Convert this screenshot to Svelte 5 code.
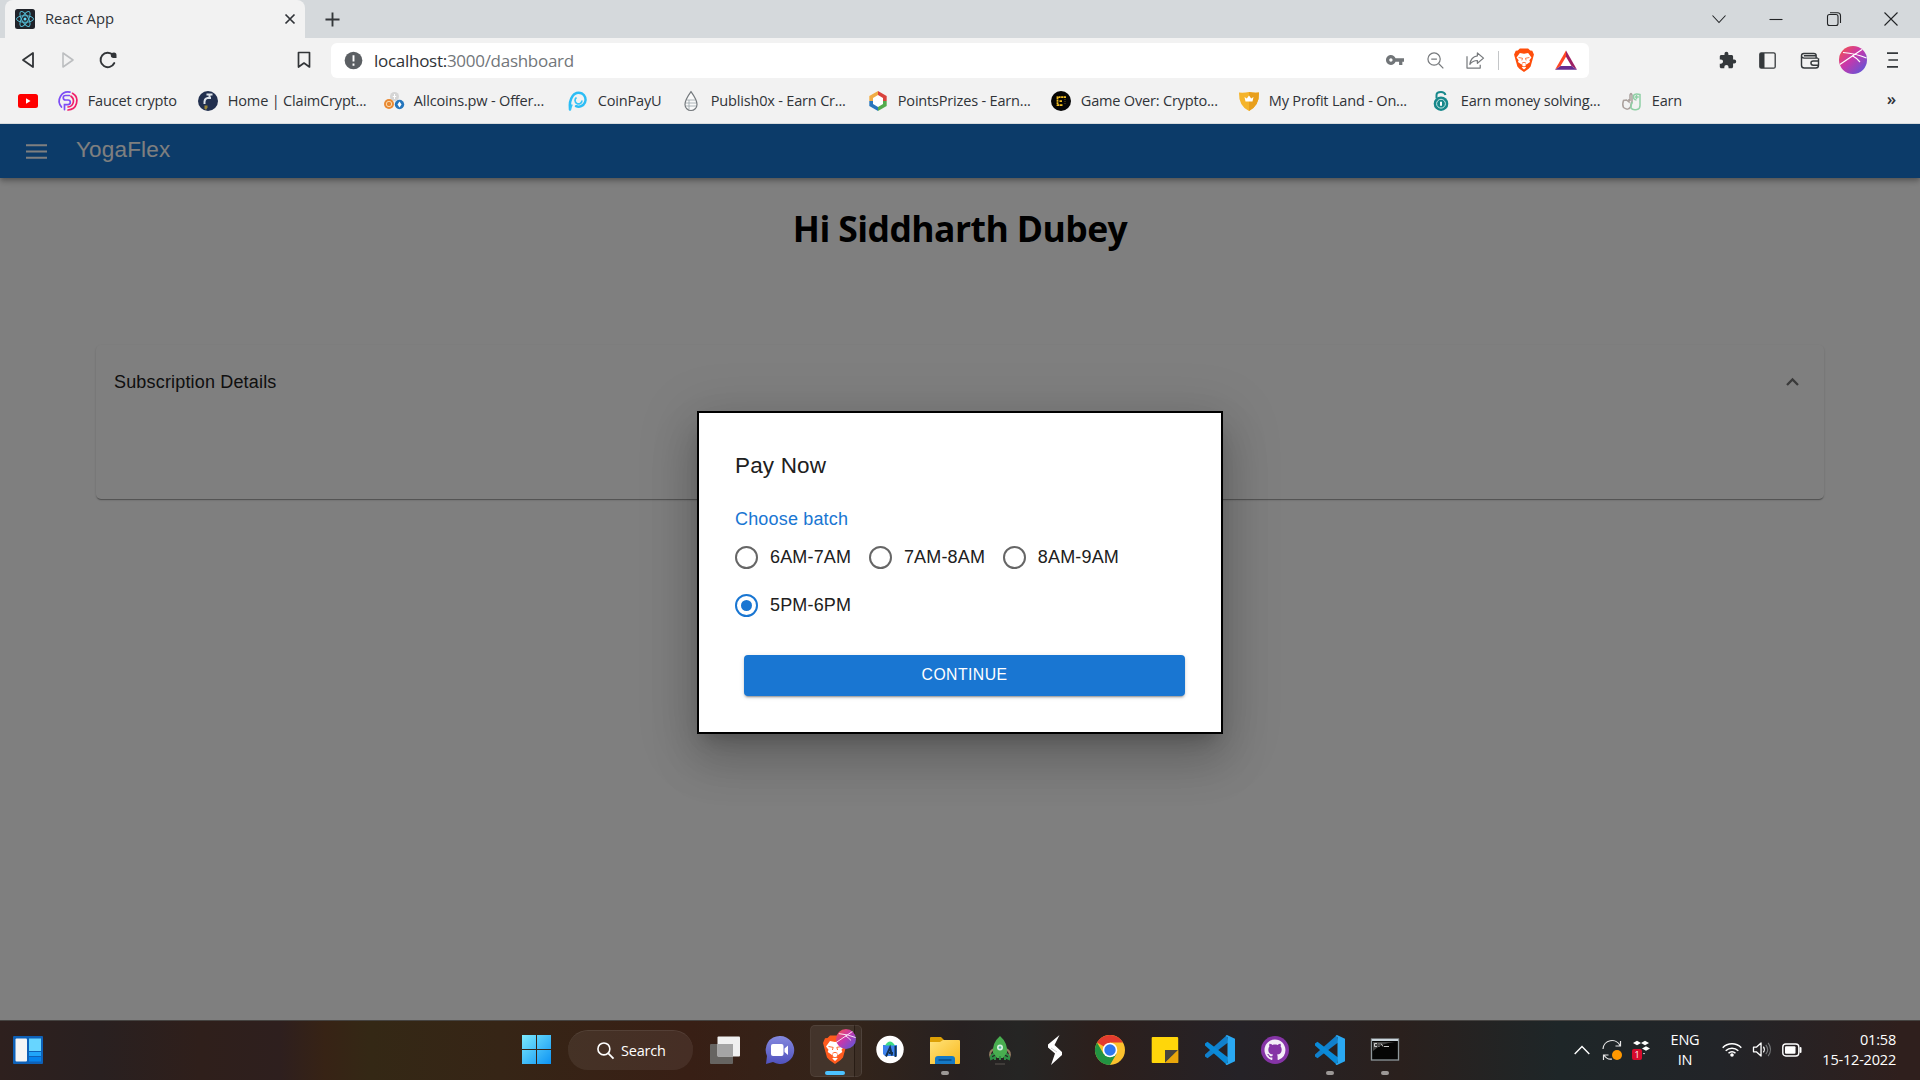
<script>
  const bookmarks = [
    { icon: 'faucet', label: 'Faucet crypto', width: 140 },
    { icon: 'claim', label: 'Home | ClaimCrypt...', width: 186 },
    { icon: 'allcoins', label: 'Allcoins.pw - Offer...', width: 184 },
    { icon: 'coinpay', label: 'CoinPayU', width: 113 },
    { icon: 'drop', label: 'Publish0x - Earn Cr...', width: 187 },
    { icon: 'points', label: 'PointsPrizes - Earn...', width: 183 },
    { icon: 'game', label: 'Game Over: Crypto...', width: 188 },
    { icon: 'profit', label: 'My Profit Land - On...', width: 192 },
    { icon: 'lock', label: 'Earn money solving...', width: 191 },
    { icon: 'earn', label: 'Earn', width: 70 }
  ];
  const batches = ['6AM-7AM', '7AM-8AM', '8AM-9AM', '5PM-6PM'];
  let batch = $state('5PM-6PM');
  const apps = [
    { name: 'taskview' }, { name: 'chat' }, { name: 'brave', active: true },
    { name: 'studio' }, { name: 'folder', open: true }, { name: 'rocket' },
    { name: 'bolt' }, { name: 'chrome' }, { name: 'notes' }, { name: 'code' },
    { name: 'github' }, { name: 'code', open: true }, { name: 'terminal', open: true }
  ];
</script>

{#snippet lion()}
  <path fill="#ff4e0b" d="M7 .5h10l2.500 2.500 2.500.3L24 8l-.8 3L20 22.500l-2.400 2.600L12 29l-5.600-3.900L4 22.500.8 11 0 8l2-4.700L4.500 3z" />
  <path fill="#fff" d="M7 6l5 1 5-1 4 5.500-2.500 3.200.8 2.300-4.300 3-1-1 .3 2.500L12 23.500 9.700 21.500l.3-2.500-1 1-4.300-3 .8-2.300L3 11.500zM12 22l2.800 1.600L12 26l-2.800-2.400z" />
  <path stroke="#ff4e0b" stroke-width=".9" fill="none" d="M5.500 11.500l4.700.9-.8 2.600M18.500 11.500l-4.700.9.8 2.600M9.500 18.300l2.500-1 2.500 1M9.500 21.700l2.500 1 2.500-1" />
{/snippet}

{#snippet ball()}
  <circle cx="14" cy="14" r="14" fill="url(#ballFill)" />
  <path d="M.8 18.500L23 3.500M4 6.500q13 1 23.500 5.500M13 9.500q4 2 8 6.500" stroke="#fff" stroke-width="1.200" fill="none" />
{/snippet}

{#snippet favicon(name)}
  <svg class="fav" viewBox="0 0 20 20">
    {#if name === 'youtube'}
      <rect y="3" width="20" height="14" rx="2.500" fill="#f00" /><path d="M8 7.200l4.500 2.800L8 12.800z" fill="#fff" />
    {:else if name === 'faucet'}
      <g fill="none" stroke-width="1.700" stroke-linecap="round">
        <path stroke="#7d4df5" d="M12 1.200A9 9 0 0 0 3.500 16M11.500 4.500H7.500a2.200 2.200 0 0 0 0 4.500h2.500a2.300 2.300 0 0 1 0 4.600H6.500v5" />
        <path stroke="#f0206a" d="M14.500 2.300A9 9 0 0 1 10 19M13 5.200A6 6 0 0 1 10 16" />
      </g>
    {:else if name === 'claim'}
      <circle cx="10" cy="10" r="10" fill="#22304f" />
      <path d="M11.500 2.500v4M8.500 3.500h6M13 7h-3.500Q6 7.500 6.500 13" fill="none" stroke="#dde3ea" stroke-width="2" />
      <path d="M6.500 14.500h3v2l-1.500 2.500-1.500-1.500z" fill="#9c8739" />
    {:else if name === 'allcoins'}
      <circle cx="10.500" cy="5.500" r="4.500" fill="#d5d5d5" /><path d="M10.500 3v5M8.800 5.500h3.400" stroke="#fff" />
      <circle cx="5" cy="13" r="5" fill="#e98a34" /><circle cx="5" cy="13" r="2.700" fill="none" stroke="#fbd9ac" />
      <circle cx="15.500" cy="13.500" r="4.700" fill="#2576bd" /><path d="M15.500 10.500l2 3-2 3-2-3z" fill="#fff" />
    {:else if name === 'coinpay'}
      <path d="M2 18.500Q1 10 4.500 5.200A7 7 0 1 1 8 15.200" fill="none" stroke="#2cbdf5" stroke-width="2.500" stroke-linecap="round" />
      <path d="M4 13.500L2 19M8.500 6.500a3.500 3.500 0 1 0 5.500 3" fill="none" stroke="#38c5f7" stroke-width="1.700" />
    {:else if name === 'drop'}
      <path d="M10 .7Q4 9 4 13.500a6 6 0 0 0 12 0Q16 9 10 .7z" fill="#fafafa" stroke="#74797d" stroke-width="1.200" />
      <path d="M6 9h8M5 12h10M5 15h10M8 9v9" stroke="#9aa3a8" stroke-width=".8" />
    {:else if name === 'points'}
      <path d="M10 0l8.700 5v10L10 20l-8.700-5V5z" fill="#fff" />
      <path d="M10 0v4L5 7v3H1.300V5z" fill="#f0ac45" /><path d="M10 0l8.700 5v5H15V7l-5-3z" fill="#d9433d" />
      <path d="M18.700 10v5L10 20v-4l5-3v-3z" fill="#53ac4d" /><path d="M1.300 10H5v3l5 3v4l-8.700-5z" fill="#2976bb" />
    {:else if name === 'game'}
      <circle cx="10" cy="10" r="10" fill="#050505" />
      <path d="M15 6.200H6.500v8H12M11 10.200H8" fill="none" stroke="#f2bd20" stroke-width="1.800" stroke-dasharray="2.200 .5" /><path d="M14 8v6" stroke="#69551a" stroke-dasharray="1 1" />
    {:else if name === 'profit'}
      <path d="M0 1.500q5 .5 10-.5 5 1 10 .5.500 13-10 18.500Q-.5 15 0 1.500z" fill="#f5b42b" /><path d="M10 1q5 1 10 .5.500 13-10 18.500z" fill="#e89f1c" />
      <path d="M5.500 6l2.300 1.500L10 4.500l2.200 3L14.500 6l-1 4.500h-7z" fill="#fff" />
    {:else if name === 'lock'}
      <circle cx="10" cy="12.700" r="7.300" fill="#17888b" /><circle cx="10" cy="12.700" r="4.400" fill="none" stroke="#c7e7e5" stroke-width="1" />
      <path d="M5.500 7V4q0-3 4.500-3 3.500 0 4.500 3" fill="none" stroke="#17888b" stroke-width="2" /><path d="M10 10.700v4" stroke="#fff" stroke-width="2" />
    {:else if name === 'earn'}
      <g fill="none" stroke-width="1.500"><path stroke="#aaa09c" d="M8 10V4q1-3 2 0v7M7 8v3L4.500 9 1.500 9.500q-1.500 4 0 7Q6 20 8.500 16l1-5" /><path stroke="#8fd0a5" d="M10.500 11q-2 3-1.500 6 1.500 2.500 6 1.500 3-.5 3-4V3.500q-5-1.500-6.500 1-.5 4.500 3 4.500M14.500 4v4M12.800 6h4" /></g>
    {/if}
  </svg>
{/snippet}

{#snippet appIcon(name)}
  <svg class="app" viewBox="0 0 30 30">
    {#if name === 'taskview'}
      <rect y="9" width="23" height="20" rx="1" fill="#666461" /><rect x="7.500" y="1.500" width="22.500" height="20" rx="1" fill="#f0f0f0" /><path d="M7.500 9H23v12.500H7.500z" fill="#a5a5a5" />
    {:else if name === 'chat'}
      <path d="M15 1a14 14 0 1 1-7 26l-7 2 1-8A14 14 0 0 1 15 1z" fill="url(#chatFill)" />
      <rect x="6" y="9" width="12.500" height="12" rx="2" fill="#fff" /><path d="M19.500 13.500l3.500-3v9.500l-3.500-3z" fill="#fff" />
    {:else if name === 'brave'}
      <g transform="translate(3 0)">{@render lion()}</g>
    {:else if name === 'studio'}
      <circle cx="15" cy="14.500" r="13.700" fill="#fff" /><path d="M8 10h14v11H10l-2-2z" fill="#3d82ee" />
      <path d="M10 10.500q5-8 10 0z" fill="#3ddc84" /><path d="M11 21.500l4-9 2 8M14 18h4M20.500 11v11" fill="none" stroke="#133251" stroke-width="2" />
    {:else if name === 'folder'}
      <path d="M0 3q0-1 1-1h10l3 3v5H0z" fill="#dda006" /><path d="M0 7h10l3-2h16q1 0 1 1v22q0 1-1 1H0z" fill="url(#folderFill)" />
      <path d="M5 29v-5q0-3 3-3h14q3 0 3 3v5z" fill="#1579c5" /><path d="M8.500 25h13" stroke="#064b87" stroke-width="1.500" />
    {:else if name === 'rocket'}
      <path d="M9 14q-6 3-3 9M21 14q6 3 3 9" fill="none" stroke="#927b61" stroke-width="2" />
      <path d="M15 1q8 7 7 17l-4 5h-6l-4-5Q7 8 15 1z" fill="#49ae50" /><path d="M9 19q-4 1-3 5l4-2v3M21 19q4 1 3 5l-4-2v3M15 21v4" fill="none" stroke="#2f9145" stroke-width="2" />
      <circle cx="15" cy="12.500" r="3" fill="#d7efe1" /><circle cx="15" cy="12.500" r="1.300" fill="#50b79a" /><path d="M10 29h10" stroke="#5a5450" />
    {:else if name === 'bolt'}
      <path d="M19.500 0L8 9.500v3l7 6L11 30l11-10v-3l-7.500-7z" fill="#fff" /><path d="M11 13l6 4" stroke="#aaa" stroke-width=".6" />
    {:else if name === 'chrome'}
      <circle cx="15" cy="15" r="15" fill="#fbc12d" /><path d="M15 15L2 7.500A15 15 0 0 1 28 7.500H15z" fill="#e33b2e" />
      <path d="M2 7.500A15 15 0 0 0 15 30l6.500-11.300L15 15 8.500 18.700z" fill="#229342" /><circle cx="15" cy="15" r="7.300" fill="#fff" /><circle cx="15" cy="15" r="5.700" fill="#2e77ee" />
    {:else if name === 'notes'}
      <rect x="1.700" y="2" width="26.500" height="26" rx="1" fill="#ffd60a" /><path d="M15 15h13.200L15 28z" fill="#48443c" /><path d="M28.200 15v13H15z" fill="#e9a60b" />
    {:else if name === 'code'}
      <path d="M22 0L0 19.500v2l2.500 1.700L23 7.500z" fill="#1180cc" /><path d="M22 30L0 10.500v-2L2.500 6.800 23 22.500z" fill="#0a8ad8" />
      <path d="M22 0l8 3.800v22.400L22 30q-1-.2-1.500-1l2-1V2l-2-1z" fill="#2aa8f2" />
    {:else if name === 'github'}
      <circle cx="15" cy="15" r="14" fill="#8534a6" />
      <path transform="translate(4.500 4.500) scale(1.310)" fill="#f4eef8" d="M8 0C3.580 0 0 3.580 0 8c0 3.540 2.290 6.530 5.470 7.590.4.070.55-.17.55-.38 0-.19-.01-.82-.01-1.490-2.010.37-2.530-.49-2.690-.94-.09-.23-.48-.94-.82-1.130-.28-.15-.68-.52-.01-.53.63-.01 1.080.58 1.230.82.72 1.210 1.870.87 2.330.66.070-.52.28-.87.51-1.070-1.780-.2-3.640-.89-3.640-3.950 0-.87.31-1.590.82-2.150-.08-.2-.36-1.020.08-2.120 0 0 .67-.21 2.200.82.64-.18 1.320-.27 2-.27s1.360.09 2 .27c1.530-1.040 2.200-.82 2.200-.82.44 1.100.16 1.920.08 2.120.51.56.82 1.270.82 2.150 0 3.070-1.870 3.750-3.650 3.950.29.25.54.73.54 1.480v2.200c0 .21.15.46.55.38A8 8 0 0 0 16 8c0-4.420-3.580-8-8-8z" />
    {:else if name === 'terminal'}
      <rect x="1.500" y="4" width="27" height="21" fill="#050505" stroke="#8e979b" stroke-width="1.300" /><path d="M2 5h26" stroke="#cbd5dc" stroke-width="2" /><path d="M3 7h22q-14 1-22 9z" fill="#444" />
      <path d="M7 8.500H4.500v3H7M9 8.500v.8M9 11v.8M11 8.500l2 3M14 11.500h5" fill="none" stroke="#ddd" stroke-width=".9" />
    {/if}
  </svg>
{/snippet}

<svg class="defs" aria-hidden="true">
  <defs>
    <linearGradient id="ballFill" x1="0" y1="0" x2="1" y2="1"><stop offset="0.05" stop-color="#f4524d" /><stop offset=".45" stop-color="#c837ab" /><stop offset="1" stop-color="#4c5ce0" /></linearGradient>
    <linearGradient id="chatFill" x1="0" y1="0" x2="0" y2="1"><stop offset="0" stop-color="#8489df" /><stop offset="1" stop-color="#5052bd" /></linearGradient>
    <linearGradient id="folderFill" x1="0" y1="0" x2="1" y2="1"><stop offset="0" stop-color="#ffe27a" /><stop offset="1" stop-color="#f9b91d" /></linearGradient>
    <linearGradient id="winFill" x1="0" y1="0" x2="1" y2="1"><stop offset="0" stop-color="#7ceafd" /><stop offset="1" stop-color="#0d93f4" /></linearGradient>
  </defs>
</svg>

<div class="screen">
  <header class="tabs">
    <div class="tab">
      <svg class="fav" viewBox="0 0 20 20"><rect width="20" height="20" rx="2.500" fill="#20232a" /><g fill="none" stroke="#53b9d1" stroke-width="1"><ellipse cx="10" cy="10" rx="8.500" ry="3.300" /><ellipse cx="10" cy="10" rx="8.500" ry="3.300" transform="rotate(60 10 10)" /><ellipse cx="10" cy="10" rx="8.500" ry="3.300" transform="rotate(120 10 10)" /></g><circle cx="10" cy="10" r="1.500" fill="#61dafb" /></svg>
      <span>React App</span>
      <svg class="close" viewBox="0 0 10 10"><path d="M.5.5l9 9M9.500.5l-9 9" stroke="#303338" stroke-width="1.700" /></svg>
    </div>
    <svg class="plus" viewBox="0 0 16 16"><path d="M8 .5v15M.5 8h15" stroke="#34373a" stroke-width="2" /></svg>
    <div class="window">
      <svg viewBox="0 0 14 14"><path d="M.5 3.500L7 10.500l6.500-7" /></svg>
      <svg viewBox="0 0 14 14"><path d="M.5 7.500h13" /></svg>
      <svg viewBox="0 0 14 14"><rect x=".5" y="2.500" width="10.500" height="11" rx="2" /><path d="M3 .7h7.500q3 0 3 3V11" /></svg>
      <svg viewBox="0 0 14 14"><path d="M.5.5l13 13M13.500.5l-13 13" /></svg>
    </div>
  </header>

  <nav class="toolbar">
    <svg class="back" viewBox="0 0 14 18"><path d="M12 2v14L2 9z" fill="none" stroke="#323538" stroke-width="1.800" stroke-linejoin="round" /></svg>
    <svg class="forward" viewBox="0 0 14 18"><path d="M2 2v14l10-7z" fill="none" stroke="#bcbec0" stroke-width="1.600" stroke-linejoin="round" /></svg>
    <svg class="reload" viewBox="0 0 18 18"><path d="M15.300 12A7.200 7.200 0 1 1 14 4" fill="none" stroke="#323538" stroke-width="1.900" stroke-linecap="round" /><path d="M15 1.600q2.500 0 2.500 2.700V7h-3q-2.700 0-2.700-2.700 0-2.700 3.200-2.700z" fill="#323538" /></svg>
    <svg class="mark" viewBox="0 0 14 18"><path d="M1.500 1.500h11v14.500L7 12l-5.500 4z" fill="none" stroke="#323538" stroke-width="1.700" stroke-linejoin="round" /></svg>
    <div class="address">
      <svg class="info" viewBox="0 0 20 20"><circle cx="10" cy="10" r="9.300" fill="#5b5f63" /><path d="M10 4.500v6.500M10 13.200v2.200" stroke="#fff" stroke-width="2" /></svg>
      <span class="url">localhost:<i>3000/dashboard</i></span>
      <svg class="key" viewBox="1 5 22 14"><path fill="#717578" d="M12.650 10C11.830 7.670 9.610 6 7 6c-3.310 0-6 2.690-6 6s2.690 6 6 6c2.610 0 4.830-1.670 5.650-4H17v4h4v-4h2v-4H12.650zM7 14c-1.100 0-2-.9-2-2s.9-2 2-2 2 .9 2 2-.9 2-2 2z" /></svg>
      <svg class="lens" viewBox="0 0 18 18"><g fill="none" stroke="#777a7d" stroke-width="1.300"><circle cx="7.500" cy="7.500" r="6.500" /><path d="M12.500 12.500l4.800 4.800M4.500 7.500h6" /></g></svg>
      <svg class="share" viewBox="0 0 20 18"><path d="M1 4.500v12.500h14v-3.500M12 1l6.500 5.500L12 12V9q-5 0-8 4 1-8 8-9z" fill="none" stroke="#777a7d" stroke-width="1.300" stroke-linejoin="round" /></svg>
      <b class="rule"></b>
      <svg class="shield" viewBox="0 0 24 29">{@render lion()}</svg>
      <svg class="bat" viewBox="0 0 24 21"><path d="M12 0v7L6 17l-6 4z" fill="#ff4724" /><path d="M12 0l12 21-6-4-6-10z" fill="#9e1f63" /><path d="M0 21l6-4h12l6 4z" fill="#662d91" /></svg>
    </div>
    <div class="extras">
      <svg class="puzzle" viewBox="1 0 23 23"><path fill="#34383b" d="M20.500 11H19V7c0-1.100-.9-2-2-2h-4V3.500a2.500 2.500 0 0 0-5 0V5H4c-1.100 0-2 .9-2 2v3.800h1.500a2.700 2.700 0 0 1 0 5.400H2V20c0 1.100.9 2 2 2h3.800v-1.500a2.700 2.700 0 0 1 5.400 0V22H17c1.100 0 2-.9 2-2v-4h1.500a2.500 2.500 0 0 0 0-5z" /></svg>
      <svg class="panel" viewBox="0 0 17 17"><rect x=".8" y=".8" width="15.400" height="15.400" rx="1.500" fill="none" stroke="#34383b" stroke-width="1.300" /><path d="M1 1h4.500v15H1z" fill="#34383b" /></svg>
      <svg class="wallet" viewBox="0 0 20 18"><path d="M18.500 6.500H4Q1 6.500 1 4v10q0 3 3 3h12q3 0 3-3V6.500M1 4q0-2.500 2.500-2.500H14q2.500 0 2.500 2v3M3.500 4H16M19 9.500h-5.500q-2.500 0-2.500 2.200 0 2.300 2.500 2.300H19" fill="none" stroke="#34383b" stroke-width="1.500" /></svg>
      <svg class="avatar" viewBox="0 0 28 28">{@render ball()}</svg>
      <svg class="dots" viewBox="0 0 12 18"><path d="M0 1.500h12M1.500 9H12M0 16.500h12" stroke="#34383b" stroke-width="1.800" /></svg>
    </div>
  </nav>

  <div class="bookmarks">
    <div class="yt">{@render favicon('youtube')}</div>
    {#each bookmarks as b}
      <div class="bookmark" style="width:{b.width}px">{@render favicon(b.icon)}<span>{b.label}</span></div>
    {/each}
    <span class="more">»</span>
  </div>

  <main class="page">
    <div class="appbar">
      <svg viewBox="0 0 20 14"><path d="M0 1h20M0 7h20M0 13h20" stroke="#fff" stroke-width="2" /></svg>
      <span>YogaFlex</span>
    </div>
    <h1>Hi Siddharth Dubey</h1>
    <section class="card">
      <span>Subscription Details</span>
      <svg viewBox="0 0 13 8"><path d="M1 7l5.500-5.500L12 7" fill="none" stroke="#757575" stroke-width="2.300" /></svg>
    </section>

    <div class="overlay">
      <div class="modal">
        <h2>Pay Now</h2>
        <p>Choose batch</p>
        <div class="options">
          {#each batches as b}
            <button class="option" class:on={batch === b} onclick={() => (batch = b)}><b class="radio"></b>{b}</button>
          {/each}
        </div>
        <button class="continue">CONTINUE</button>
      </div>
    </div>
  </main>

  <footer class="taskbar">
    <svg class="widgets" viewBox="0 0 30 28"><rect width="30" height="28" rx="1" fill="#0e61b8" /><rect x="2.500" y="2.500" width="11.500" height="23" rx="1" fill="#f5f5f5" /><path d="M16 2.500h12V15H16z" fill="#67d5ff" /><path d="M16 16h12v4H16z" fill="#20a5fa" /><path d="M16 21h12v4.500H16z" fill="#0683ec" /></svg>
    <svg class="start" viewBox="0 0 29 29"><path d="M0 0h14v14H0zM15 0h14v14H15zM0 15h14v14H0zM15 15h14v14H15z" fill="url(#winFill)" /></svg>
    <div class="search">
      <svg viewBox="0 0 18 18"><circle cx="7.300" cy="7.300" r="6.300" fill="none" stroke="#fff" stroke-width="1.700" /><path d="M12 12l5.500 5.500" stroke="#fff" stroke-width="1.900" /></svg>
      <span>Search</span>
    </div>
    <div class="apps">
      {#each apps as a}
        <div class="slot" class:active={a.active} class:open={a.open}>
          {@render appIcon(a.name)}
          {#if a.active}<svg class="badge" viewBox="0 0 28 28">{@render ball()}</svg>{/if}
        </div>
      {/each}
    </div>
    <div class="tray">
      <svg class="up" viewBox="0 0 16 10"><path d="M.7 9L8 1.500 15.300 9" fill="none" stroke="#fff" stroke-width="1.400" /></svg>
      <svg class="sync" viewBox="0 0 20 20"><path d="M1 9a9 9 0 0 1 17-3.500M18.500 1v5h-5M1.500 20v-5h5M2 15q3 5 8 4" fill="none" stroke="#e6e6e6" stroke-width="1.200" /><circle cx="15" cy="15" r="5" fill="#ff9800" /></svg>
      <div class="drop">
        <svg viewBox="0 0 18 20"><path d="M1 3l4-2.300L9 3 5 5.300zM9 3l4-2.300L17 3l-4 2.300zM10 8.500l4-2.300 4 2.300-4 2.300zM11 13l2 0-1 1.500z" fill="#fff" /></svg>
        <span>1</span>
      </div>
      <div class="lang"><span>ENG</span><span>IN</span></div>
      <svg class="wifi" viewBox="0 0 20 15"><g fill="none" stroke="#fff" stroke-width="1.500"><path d="M.7 5.700a13 13 0 0 1 18.600 0M3.700 8.700a9 9 0 0 1 12.600 0M6.500 11.300a5 5 0 0 1 7 0" /></g><circle cx="10" cy="13" r="1.800" fill="#fff" /></svg>
      <svg class="sound" viewBox="0 0 20 18"><path d="M1 6.500h3L9 2v14l-5-4.500H1z" fill="none" stroke="#fff" stroke-width="1.400" stroke-linejoin="round" /><path d="M11.500 6q2 3 0 6" fill="none" stroke="#fff" stroke-width="1.200" /><path d="M14 4q4 5 0 10M16.500 2q5 7 0 14" fill="none" stroke="#77797b" stroke-width="1.200" /></svg>
      <svg class="battery" viewBox="0 0 20 14"><rect x=".8" y="1" width="16" height="12" rx="3" fill="none" stroke="#fff" stroke-width="1.400" /><rect x="3" y="3.300" width="10.500" height="7.400" rx="1" fill="#fff" /><path d="M18.500 5v4" stroke="#fff" stroke-width="2" stroke-linecap="round" /></svg>
      <div class="clock"><span>01:58</span><span>15-12-2022</span></div>
    </div>
  </footer>
</div>

<style>
  :global(body) { margin: 0; overflow: hidden; }
  svg { display: block; flex: none; overflow: visible; }
  .defs { position: absolute; width: 0; height: 0; }
  .screen { width: 1920px; height: 1080px; display: flex; flex-direction: column; font-family: "Open Sans", "Noto Sans", sans-serif; color: #303338; background: #f2f2f2; overflow: hidden; }
  .screen * { box-sizing: border-box; }
  span { white-space: nowrap; }
  .fav { width: 20px; height: 20px; }

  .tabs { height: 38px; flex: none; display: flex; align-items: center; padding-left: 5px; background: #d5d9dc; }
  .tab { width: 300px; height: 38px; display: flex; align-items: center; padding: 0 10px; gap: 10px; background: #f2f2f2; border-radius: 8px 8px 0 0; font-size: 14.800px; letter-spacing: -.05px; }
  .tab span { padding-bottom: 2px; }
  .close { width: 10px; height: 10px; margin-left: auto; }
  .plus { width: 15px; height: 15px; margin-left: 20px; }
  .window { margin-left: auto; display: flex; gap: 43.300px; padding: 0 22px 1px 0; }
  .window svg { width: 14px; height: 14px; fill: none; stroke: #222426; stroke-width: 1.100; }

  .toolbar { height: 45px; flex: none; display: flex; align-items: center; padding: 0 0 1px 21px; }
  .back, .forward, .mark { width: 14px; height: 18px; }
  .forward { margin-left: 26px; }
  .reload { width: 18px; height: 18px; margin-left: 24px; }
  .mark { margin-left: 180px; }
  .address { width: 1258px; height: 35px; margin: 1px 0 0 20px; padding: 0 12px 1px 13px; display: flex; align-items: center; background: #fff; border-radius: 6px; }
  .info { width: 19px; height: 19px; }
  .url { margin-left: 11px; font-size: 17px; letter-spacing: -.28px; }
  .url i { font-style: normal; color: #72767a; }
  .key { width: 18px; height: 12px; margin-left: auto; }
  .lens { width: 17px; height: 17px; margin-left: 23px; }
  .share { width: 19px; height: 17px; margin-left: 22px; }
  .rule { width: 1px; height: 19px; margin: 0 15px 0 13px; background: #c4c6c8; }
  .shield { width: 20px; height: 24px; }
  .bat { width: 22px; height: 20px; margin-left: 21px; }
  .extras { display: flex; align-items: center; margin-left: auto; padding-right: 22px; }
  .puzzle { width: 18px; height: 18px; }
  .panel { width: 17px; height: 17px; margin-left: 22px; }
  .wallet { width: 20px; height: 17px; margin-left: 24px; }
  .avatar { width: 28px; height: 28px; margin-left: 19px; }
  .dots { width: 11px; height: 18px; margin-left: 20px; }

  .bookmarks { height: 41px; flex: none; display: flex; align-items: center; padding: 0 24px 5px 18px; border-bottom: 1px solid #d8dbdd; font-size: 14.550px; letter-spacing: -.2px; }
  .yt { width: 40px; }
  .bookmark { flex: none; display: flex; align-items: center; gap: 9.800px; }
  .bookmark span { padding-bottom: 1px; }
  .more { margin-left: auto; font-size: 17px; font-weight: 600; padding-bottom: 4px; }

  .page { position: relative; height: 896px; flex: none; background: #fff; font-family: "Liberation Sans", Arial, sans-serif; overflow: hidden; }
  .appbar { height: 54px; display: flex; align-items: center; padding-left: 26px; gap: 29px; background: #1976d2; color: #fff; font-size: 22.500px; letter-spacing: .17px; box-shadow: 0 2px 4px -1px rgba(0,0,0,.2), 0 4px 5px rgba(0,0,0,.14), 0 1px 11px rgba(0,0,0,.12); }
  .appbar svg { width: 21px; height: 15px; }
  .appbar span { margin-top: -3px; }
  h1 { margin: 25px 0 0; height: 50px; text-align: center; font: 700 35.500px/50px "Open Sans", sans-serif; letter-spacing: -.57px; color: #000; }
  .card { width: 1728px; height: 154px; margin: 92px 96px 0; padding: 27px 25px 0 18px; display: flex; justify-content: space-between; border-radius: 5px; background: #fff; box-shadow: 0 2px 1px -1px rgba(0,0,0,.2), 0 1px 1px rgba(0,0,0,.14), 0 1px 3px rgba(0,0,0,.12); font-size: 18px; letter-spacing: .17px; color: #212121; }
  .card svg { width: 13px; height: 8px; margin-top: 6px; }
  .overlay { position: absolute; inset: 0; display: flex; align-items: center; justify-content: center; background: rgba(0,0,0,.5); }
  .modal { width: 526px; height: 323px; margin-top: 1px; padding: 35px 36px 36px; border: 2px solid #000; background: #fff; color: #202020; box-shadow: 0 12px 17px -8px rgba(0,0,0,.2), 0 27px 43px 3px rgba(0,0,0,.14), 0 10px 52px 9px rgba(0,0,0,.12); }
  h2 { margin: 0; font-size: 22.500px; line-height: 36px; font-weight: 400; letter-spacing: .17px; }
  p { margin: 22px 0 0; font-size: 18px; line-height: 26px; color: #1976d2; letter-spacing: .17px; }
  .options { display: flex; flex-wrap: wrap; column-gap: 17.700px; margin-top: 1px; }
  button { border: 0; padding: 0; background: none; font: inherit; color: inherit; }
  .option { height: 48px; display: flex; align-items: center; gap: 12px; font-size: 18px; letter-spacing: .17px; }
  .radio { width: 23px; height: 23px; display: flex; border: 2px solid #666; border-radius: 50%; }
  .on .radio { border-color: #1976d2; padding: 4px; background: #1976d2 content-box; }
  .continue { width: 441px; height: 41px; margin: 26px 0 0 9px; padding-bottom: 2px; border-radius: 4px; background: #1976d2; color: #fff; font-size: 15.750px; letter-spacing: .45px; box-shadow: 0 3px 1px -2px rgba(0,0,0,.2), 0 2px 2px rgba(0,0,0,.14), 0 1px 5px rgba(0,0,0,.12); }

  .taskbar { height: 60px; flex: none; display: flex; align-items: center; padding: 0 24px 2px 13px; color: #fff; border-top: 1px solid #454341; background: linear-gradient(90deg, #2e201e 0, #292020 100px, #2f1f1b 200px, #2e1f1e 280px, #372315 325px, #342815 370px, #362516 500px, #381f15 690px, #33241a 850px, #272121 960px, #252524 1020px, #2c1f1c 1100px, #252227 1240px, #2a201d 1400px, #1e2628 1560px, #222428 1720px, #2f1f1d 1900px); }
  .widgets { width: 30px; height: 28px; }
  .start { width: 29px; height: 29px; margin-left: 479px; }
  .search { width: 125px; height: 40px; margin-left: 17px; padding-left: 29px; display: flex; align-items: center; gap: 7px; border-radius: 20px; background: rgba(255,255,255,.07); border-top: 1px solid rgba(255,255,255,.08); font-size: 14.500px; letter-spacing: -.2px; }
  .search svg { width: 17px; height: 17px; }
  .apps { display: flex; margin-left: 4.500px; }
  .slot { position: relative; width: 55px; height: 50px; display: flex; align-items: center; justify-content: center; }
  .app { width: 30px; height: 30px; }
  .slot.open::after, .slot.active::after { content: ""; position: absolute; bottom: 0; width: 8px; height: 4px; border-radius: 2px; background: #9c9896; }
  .slot.active::after { width: 20px; background: #4cc2ff; bottom: 0; }
  .slot.active::before { content: ""; position: absolute; left: 2px; top: 0; width: 50px; height: 50px; border-radius: 5px; background: linear-gradient(90deg, rgba(255,255,255,.08) 43px, rgba(0,0,0,.2) 43px, rgba(0,0,0,.2) 44px, rgba(255,255,255,.05) 44px); border: 1px solid rgba(255,255,255,.07); }
  .badge { position: absolute; left: 28px; top: 4px; width: 20px; height: 20px; }
  .tray { margin-left: auto; display: flex; align-items: center; }
  .up { width: 16px; height: 10px; }
  .sync { width: 20px; height: 20px; margin-left: 12px; }
  .drop { position: relative; width: 18px; height: 20px; margin-left: 10px; }
  .drop span { position: absolute; left: 0; bottom: 0; width: 10px; height: 11px; border-radius: 2px; background: #d80b2c; font-size: 9px; line-height: 11px; text-align: center; }
  .lang, .clock { display: flex; flex-direction: column; font-size: 14.500px; line-height: 20px; letter-spacing: -.2px; }
  .lang { width: 30px; margin-left: 20px; align-items: center; }
  .wifi { width: 20px; height: 15px; margin-left: 22px; }
  .sound { width: 20px; height: 17px; margin-left: 10px; }
  .battery { width: 20px; height: 14px; margin-left: 10px; }
  .clock { width: 94px; align-items: flex-end; letter-spacing: -.2px; }
</style>
